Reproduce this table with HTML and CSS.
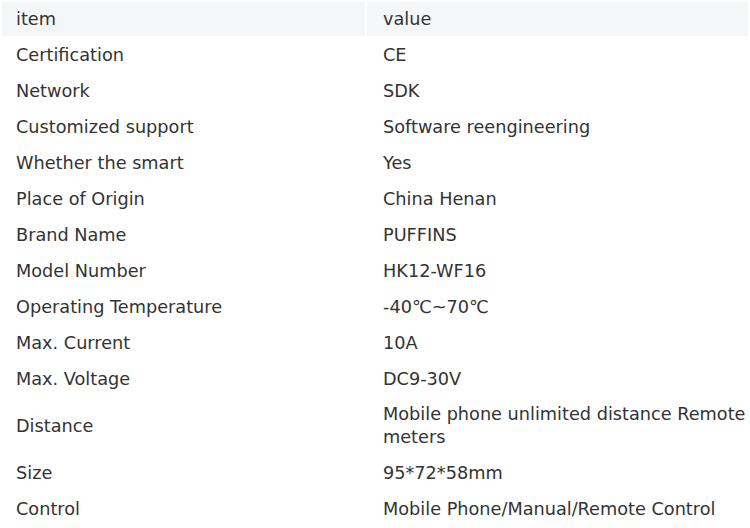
FILE: index.html
```html
<!DOCTYPE html>
<html>
<head>
<meta charset="utf-8">
<link rel="stylesheet" href="styles.css">
</head>
<body>
<table class="spec">
  <colgroup><col class="c1"><col class="c2"></colgroup>
  <thead>
    <tr><th class="k">item</th><th class="v">value</th></tr>
  </thead>
  <tbody>
    <tr><td class="k">Certification</td><td class="v">CE</td></tr>
    <tr><td class="k">Network</td><td class="v">SDK</td></tr>
    <tr><td class="k">Customized support</td><td class="v">Software reengineering</td></tr>
    <tr><td class="k">Whether the smart</td><td class="v">Yes</td></tr>
    <tr><td class="k">Place of Origin</td><td class="v">China Henan</td></tr>
    <tr><td class="k">Brand Name</td><td class="v">PUFFINS</td></tr>
    <tr><td class="k">Model Number</td><td class="v">HK12-WF16</td></tr>
    <tr><td class="k">Operating Temperature</td><td class="v">-40℃~70℃</td></tr>
    <tr><td class="k">Max. Current</td><td class="v">10A</td></tr>
    <tr><td class="k">Max. Voltage</td><td class="v">DC9-30V</td></tr>
    <tr><td class="k">Distance</td><td class="v">Mobile phone unlimited distance Remote meters</td></tr>
    <tr><td class="k">Size</td><td class="v">95*72*58mm</td></tr>
    <tr><td class="k">Control</td><td class="v">Mobile Phone/Manual/Remote Control</td></tr>
  </tbody>
</table>
</body>
</html>
```
FILE: styles.css
```css
html, body {
  margin: 0;
  padding: 0;
  background: #ffffff;
}
.spec {
  border-collapse: separate;
  border-spacing: 2px;
  width: 750px;
  table-layout: fixed;
  font-family: "DejaVu Sans", Verdana, sans-serif;
  font-size: 17.7px;
  line-height: 23px;
  color: #333333;
}
.c1 { width: 363px; }
.c2 { width: 381px; }
.spec th, .spec td {
  height: 34px;
  box-sizing: border-box;
  padding: 5px 0 5px 0;
  text-align: left;
  vertical-align: middle;
  font-weight: normal;
}
.spec th {
  background: #f5f6f8;
}
.spec .k { padding-left: 14px; }
.spec .v { padding-left: 16px; padding-right: 0; }
```
